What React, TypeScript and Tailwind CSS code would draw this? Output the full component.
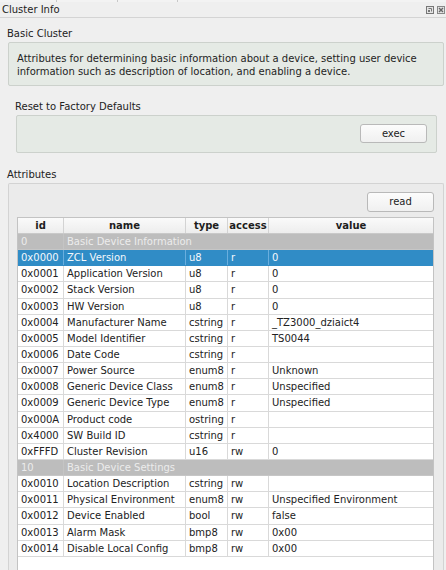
import React from "react";

type Row =
  | { kind: "group"; id: string; name: string }
  | { kind: "attr"; id: string; name: string; type: string; access: string; value: string; selected?: boolean };

const rows: Row[] = [
  { kind: "group", id: "0", name: "Basic Device Information" },
  { kind: "attr", id: "0x0000", name: "ZCL Version", type: "u8", access: "r", value: "0", selected: true },
  { kind: "attr", id: "0x0001", name: "Application Version", type: "u8", access: "r", value: "0" },
  { kind: "attr", id: "0x0002", name: "Stack Version", type: "u8", access: "r", value: "0" },
  { kind: "attr", id: "0x0003", name: "HW Version", type: "u8", access: "r", value: "0" },
  { kind: "attr", id: "0x0004", name: "Manufacturer Name", type: "cstring", access: "r", value: "_TZ3000_dziaict4" },
  { kind: "attr", id: "0x0005", name: "Model Identifier", type: "cstring", access: "r", value: "TS0044" },
  { kind: "attr", id: "0x0006", name: "Date Code", type: "cstring", access: "r", value: "" },
  { kind: "attr", id: "0x0007", name: "Power Source", type: "enum8", access: "r", value: "Unknown" },
  { kind: "attr", id: "0x0008", name: "Generic Device Class", type: "enum8", access: "r", value: "Unspecified" },
  { kind: "attr", id: "0x0009", name: "Generic Device Type", type: "enum8", access: "r", value: "Unspecified" },
  { kind: "attr", id: "0x000A", name: "Product code", type: "ostring", access: "r", value: "" },
  { kind: "attr", id: "0x4000", name: "SW Build ID", type: "cstring", access: "r", value: "" },
  { kind: "attr", id: "0xFFFD", name: "Cluster Revision", type: "u16", access: "rw", value: "0" },
  { kind: "group", id: "10", name: "Basic Device Settings" },
  { kind: "attr", id: "0x0010", name: "Location Description", type: "cstring", access: "rw", value: "" },
  { kind: "attr", id: "0x0011", name: "Physical Environment", type: "enum8", access: "rw", value: "Unspecified Environment" },
  { kind: "attr", id: "0x0012", name: "Device Enabled", type: "bool", access: "rw", value: "false" },
  { kind: "attr", id: "0x0013", name: "Alarm Mask", type: "bmp8", access: "rw", value: "0x00" },
  { kind: "attr", id: "0x0014", name: "Disable Local Config", type: "bmp8", access: "rw", value: "0x00" },
];

const cols = "grid grid-cols-[46px_122px_42px_41px_1fr]";

function Button({ label, className }: { label: string; className: string }) {
  return (
    <div
      className={`flex items-center justify-center rounded-[3px] border border-[#b9b9b9] bg-gradient-to-b from-[#fcfcfc] to-[#f0f0f0] leading-none text-[#222] ${className}`}
    >
      {label}
    </div>
  );
}

function TableRow({ row }: { row: Row }) {
  if (row.kind === "group") {
    return (
      <div className="flex h-[16.15px] border-b border-[#c6c6c6] bg-[#bdbdbd] leading-[15px] text-[#ececec]">
        <div className="w-[46px] shrink-0 border-r border-[#c4c4c4] pl-[3px]">{row.id}</div>
        <div className="whitespace-nowrap pl-[3px]">{row.name}</div>
      </div>
    );
  }
  const sel = row.selected;
  const cell = sel
    ? "border-r border-[#6aaede] pl-[3px] whitespace-nowrap overflow-hidden"
    : "border-r border-[#d9d9d9] pl-[3px] whitespace-nowrap overflow-hidden";
  return (
    <div
      className={`${cols} h-[16.15px] border-b leading-[15px] ${
        sel ? "border-[#308cc6] bg-[#308cc6] text-[#f4f8fc]" : "border-[#d9d9d9] bg-white text-[#222]"
      }`}
    >
      <div className={cell}>{row.id}</div>
      <div className={cell}>{row.name}</div>
      <div className={cell}>{row.type}</div>
      <div className={cell}>{row.access}</div>
      <div className="overflow-hidden whitespace-nowrap pl-[3px]">{row.value}</div>
    </div>
  );
}

export default function App() {
  return (
    <div
      className="flex h-[570px] w-[446px] flex-col overflow-hidden bg-[#efefef] text-[10px] text-[#222]"
      style={{ fontFamily: '"DejaVu Sans", Verdana, sans-serif' }}
    >
      {/* clipped strip of the widget above */}
      <div className="h-[2px] shrink-0 overflow-hidden bg-[#f3f3f3]">
        <div className="-mt-[10px] flex leading-[12px] text-[#555]">
          <span className="w-[57px] border-r border-[#c8c8c8] pl-[17px]">name</span>
          <span className="w-[61px] border-r border-[#c8c8c8] pl-[8px]">Channel</span>
          <span className="w-[60px] border-r border-[#c8c8c8] pl-[10px]">Channel</span>
        </div>
      </div>

      {/* dock title bar */}
      <div className="flex h-4 shrink-0 items-center justify-between border-b border-[#d4d4d4] pl-[2px] pr-[1px]">
        <span className="leading-[14px] text-[#1e1e1e]">Cluster Info</span>
        <div className="flex items-center gap-[3px]">
          <svg width="8" height="8" viewBox="0 0 8 8" className="text-[#777]">
            <rect x="0.5" y="0.5" width="7" height="7" fill="#e4e4e4" stroke="currentColor" />
            <path d="M2.5 2.5h3v3" fill="none" stroke="currentColor" />
            <rect x="2" y="4" width="2" height="2" fill="currentColor" />
          </svg>
          <svg width="8" height="8" viewBox="0 0 8 8" className="text-[#666]">
            <rect x="0.5" y="0.5" width="7" height="7" fill="#e4e4e4" stroke="#888" />
            <path d="M2 2l4 4M6 2l-4 4" stroke="currentColor" strokeWidth="1.4" />
          </svg>
        </div>
      </div>

      {/* basic cluster */}
      <div className="mt-[9px] pl-[7px] leading-[13px]">Basic Cluster</div>
      <div className="ml-[8px] mt-[2px] h-[44px] w-[436px] shrink-0 rounded-[2px] border border-[#ccd1cc] bg-[#e5eae5] pl-[8px] pt-[9px] leading-[13px] text-[#1e1e1e]">
        Attributes for determining basic information about a device, setting user device
        <br />
        information such as description of location, and enabling a device.
      </div>

      {/* commands */}
      <div className="mt-[14px] pl-[15px] leading-[13px]">Reset to Factory Defaults</div>
      <div className="ml-[16px] mt-[2px] flex h-[38px] w-[421px] shrink-0 justify-end rounded-[2px] border border-[#ccd1cc] bg-[#e5eae5] pr-[9px] pt-[8px]">
        <Button label="exec" className="h-[19px] w-[67px]" />
      </div>

      {/* attributes */}
      <div className="mt-[15px] pl-[7px] leading-[13px]">Attributes</div>
      <div className="ml-[8px] mt-[2px] flex w-[436px] flex-1 flex-col rounded-t-[2px] border border-b-0 border-[#d3d3d3] bg-[#ebebeb] pl-[8px] pr-[9px] pt-[8px]">
        <div className="flex justify-end">
          <Button label="read" className="h-[20px] w-[67px]" />
        </div>
        <div className="mt-[5px] flex w-[417px] flex-1 flex-col border border-b-0 border-[#c3c3c3] bg-white">
          <div className={`${cols} h-4 border-b border-[#c9c9c9] bg-gradient-to-b from-[#fafafa] to-[#ededed] text-center font-bold leading-[15px] text-[#1e1e1e]`}>
            <div className="border-r border-[#d3d3d3]">id</div>
            <div className="border-r border-[#d3d3d3]">name</div>
            <div className="border-r border-[#d3d3d3]">type</div>
            <div className="border-r border-[#d3d3d3]">access</div>
            <div>value</div>
          </div>
          {rows.map((r) => (
            <TableRow key={r.id + r.name} row={r} />
          ))}
        </div>
      </div>
    </div>
  );
}
